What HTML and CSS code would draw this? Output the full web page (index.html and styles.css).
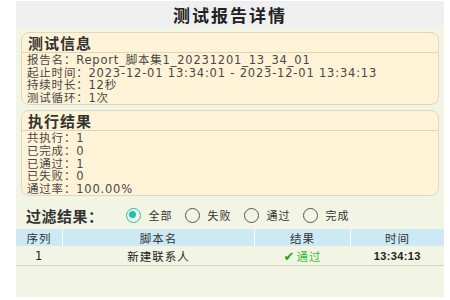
FILE: index.html
```html
<!DOCTYPE html>
<html lang="zh-CN">
<head>
    <meta charset="UTF-8">
    <meta name="viewport" content="width=device-width, initial-scale=1.0">
    <title>测试报告详情</title>
    <link rel="stylesheet" href="styles.css">
</head>
<body>
    <div class="page">
        <header class="title-bar">测试报告详情</header>

        <div class="content">
            <section class="card">
                <h2 class="card-title">测试信息</h2>
                <div class="card-body">
                    <p>报告名：Report_脚本集1_20231201_13_34_01</p>
                    <p>起止时间：2023-12-01 13:34:01 - 2023-12-01 13:34:13</p>
                    <p>持续时长：12秒</p>
                    <p>测试循环：1次</p>
                </div>
            </section>

            <section class="card">
                <h2 class="card-title">执行结果</h2>
                <div class="card-body">
                    <p>共执行：1</p>
                    <p>已完成：0</p>
                    <p>已通过：1</p>
                    <p>已失败：0</p>
                    <p>通过率：100.00%</p>
                </div>
            </section>

            <div class="filter">
                <span class="filter-label">过滤结果：</span>
                <label class="option"><span class="radio checked"></span>全部</label>
                <label class="option"><span class="radio"></span>失败</label>
                <label class="option"><span class="radio"></span>通过</label>
                <label class="option"><span class="radio"></span>完成</label>
            </div>
        </div>

        <table class="results">
            <thead>
                <tr>
                    <th class="col-no">序列</th>
                    <th class="col-name">脚本名</th>
                    <th class="col-result">结果</th>
                    <th class="col-time">时间</th>
                </tr>
            </thead>
            <tbody>
                <tr>
                    <td>1</td>
                    <td>新建联系人</td>
                    <td class="pass"><span class="tick">✔</span>通过</td>
                    <td class="time">13:34:13</td>
                </tr>
            </tbody>
        </table>
    </div>
</body>
</html>
```

FILE: styles.css
```css
body {
    margin: 0;
    padding: 0;
    background-color: #fff;
    font-family: "DejaVu Sans", "Noto Sans CJK SC", sans-serif;
    color: #333;
}

.page {
    width: 428px;
    height: 297px;
    margin-left: 16px;
    background-color: #f3f5e4;
}

.title-bar {
    height: 27px;
    line-height: 27px;
    background-color: #efefef;
    border-top: 1px solid #fff;
    box-sizing: border-box;
    text-align: center;
    font-family: "Noto Sans CJK SC", sans-serif;
    font-size: 17px;
    font-weight: bold;
    letter-spacing: 2px;
    color: #222;
}

.content {
    padding: 5px 5px 0 5px;
}

.card {
    background-color: #fef3d6;
    border: 1px solid #d9d9c4;
    border-radius: 8px;
    margin-bottom: 5px;
}

.card-title {
    margin: 0;
    padding: 0 6px;
    height: 19px;
    line-height: 19px;
    font-family: "Noto Sans CJK SC", sans-serif;
    font-size: 15px;
    font-weight: bold;
    letter-spacing: 1px;
    color: #333;
    border-bottom: 1px solid #ddd6bd;
}

.card-body {
    padding: 1px 5px 0 5px;
}

.card-body p {
    margin: 0;
    font-size: 11.5px;
    letter-spacing: 0.8px;
    line-height: 12.6px;
    color: #484848;
}

.filter {
    display: flex;
    align-items: center;
    height: 28px;
    padding-left: 5px;
    margin-top: 1px;
}

.filter-label {
    font-family: "Noto Sans CJK SC", sans-serif;
    font-size: 15px;
    font-weight: bold;
    letter-spacing: 0.5px;
    color: #333;
    margin-right: 22px;
}

.option {
    display: flex;
    align-items: center;
    font-size: 11px;
    letter-spacing: 1px;
    color: #333;
    margin-right: 12px;
}

.radio {
    width: 15px;
    height: 15px;
    border: 1.5px solid #555;
    border-radius: 50%;
    box-sizing: border-box;
    margin-right: 8px;
    position: relative;
}

.radio.checked {
    border-color: #1ec2b4;
}

.radio.checked::after {
    content: "";
    position: absolute;
    left: 2.5px;
    top: 2.5px;
    width: 7px;
    height: 7px;
    border-radius: 50%;
    background-color: #1ec2b4;
}

.results {
    width: 100%;
    border-collapse: collapse;
    font-size: 11.5px;
    letter-spacing: 1px;
}

.results th {
    background-color: #cdeaf4;
    height: 17px;
    padding: 0;
    font-weight: normal;
    color: #333;
    border-left: 1px solid #fff;
}

.results th:first-child {
    border-left: none;
}

.results td {
    height: 19px;
    padding: 0;
    text-align: center;
    color: #222;
    border-bottom: 1px solid #d6d6c6;
}

.col-no { width: 46px; }
.col-name { width: 191px; }
.col-result { width: 95px; }

.pass {
    color: #3ac13a !important;
}

.tick {
    color: #1fa51f;
    font-size: 13px;
    margin-right: 1px;
}

.time {
    font-family: "Liberation Sans", sans-serif;
    font-size: 11px;
    font-weight: bold;
    letter-spacing: 0.4px;
}
```
